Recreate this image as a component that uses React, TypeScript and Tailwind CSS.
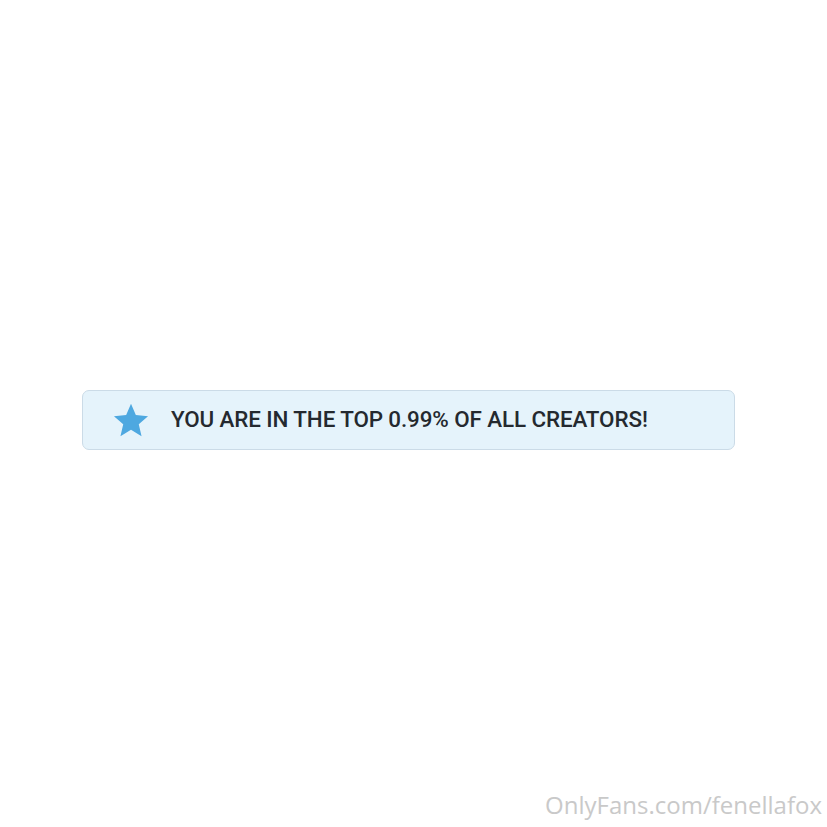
import React from 'react';

const Star = () => (
    <svg viewBox="0 0 24 24" className="w-[38px] h-[38px] shrink-0" fill="#4ea8e0">
        <path d="M12 1.8l3.05 7.1 7.7.68-5.84 5.07 1.75 7.55L12 18.2l-6.66 4 1.75-7.55L1.25 9.58l7.7-.68z" />
    </svg>
);

export default function App() {
    return (
        <div className="relative w-[827px] h-[827px] bg-white overflow-hidden">
            <div className="pt-[390px] pl-[82px]">
                <div className="w-[653px] h-[60px] flex items-center gap-[21px] pl-[29px] rounded-[7px] border border-[#cbdbe7] bg-[#e5f3fb]">
                    <Star />
                    <span className="font-['Roboto',sans-serif] font-medium text-[22.4px] text-[#24292f] tracking-[-0.1px]">
                        YOU ARE IN THE TOP 0.99% OF ALL CREATORS!
                    </span>
                </div>
            </div>
            <div className="absolute right-[5px] bottom-[4px] font-['Open_Sans',sans-serif] text-[24px] text-[#c9c9c9]">
                OnlyFans.com/fenellafox
            </div>
        </div>
    );
}
